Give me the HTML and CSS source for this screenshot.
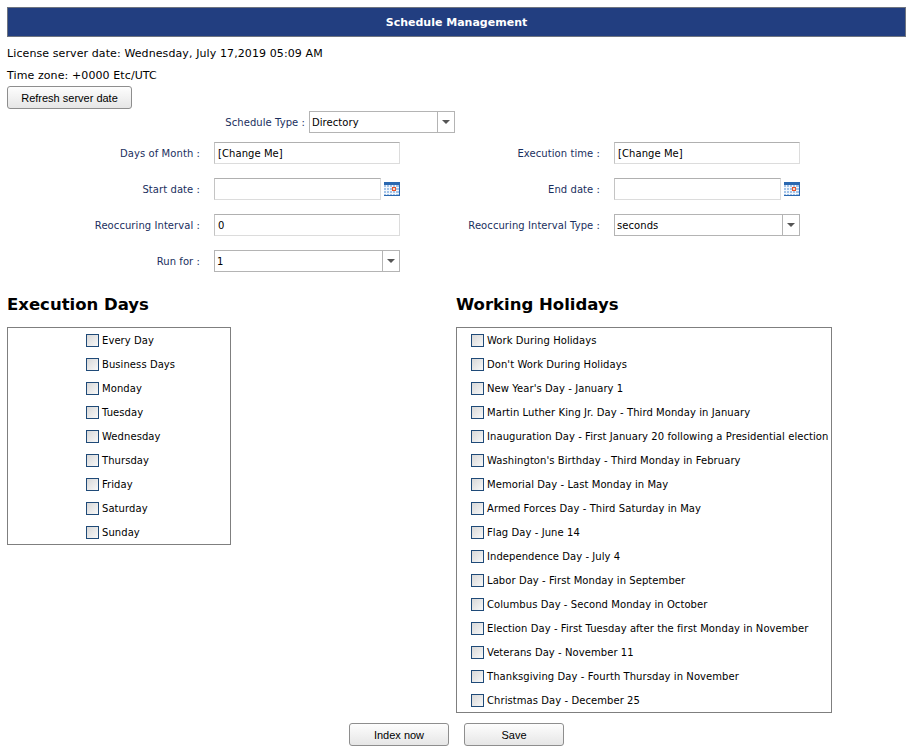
FILE: index.html
```html
<!DOCTYPE html>
<html lang="en">
<head>
    <title>Schedule Management</title>
    <link rel="stylesheet" href="styles.css">
</head>
<body>
    <svg class="defs" width="0" height="0">
        <symbol id="cal" viewBox="0 0 16 14">
            <rect x="0" y="0" width="16" height="14" fill="#2a68b0"/>
            <rect x="0" y="3" width="15" height="10" fill="#a3c3e8"/>
            <path d="M0 5.5h15M0 8.5h15M0 11.5h15M2.5 3v10M5.5 3v10M8.5 3v10M11.5 3v10" stroke="#f2f7fc" stroke-width="1"/>
            <rect x="8.5" y="5.5" width="3" height="3" fill="#f7d9cc" stroke="#e8552c"/>
        </symbol>
    </svg>

    <div class="page">
        <div class="title-bar">Schedule Management</div>
        <p class="info">License server date: Wednesday, July 17,2019 05:09 AM</p>
        <p class="info">Time zone: +0000 Etc/UTC</p>
        <button class="btn btn-refresh">Refresh server date</button>

        <div class="type-row">
            <label class="field-label type-label">Schedule Type :</label>
            <div class="combo type-combo">
                <span class="combo-value">Directory</span>
                <span class="combo-arrow"></span>
            </div>
        </div>

        <div class="form-grid">
            <label class="field-label">Days of Month :</label>
            <input class="text-input" type="text" value="[Change Me]">
            <label class="field-label">Execution time :</label>
            <input class="text-input" type="text" value="[Change Me]">

            <label class="field-label">Start date :</label>
            <div class="date-field">
                <input class="text-input" type="text">
                <svg class="cal-icon"><use href="#cal"/></svg>
            </div>
            <label class="field-label">End date :</label>
            <div class="date-field">
                <input class="text-input" type="text">
                <svg class="cal-icon"><use href="#cal"/></svg>
            </div>

            <label class="field-label">Reoccuring Interval :</label>
            <input class="text-input" type="text" value="0">
            <label class="field-label">Reoccuring Interval Type :</label>
            <div class="combo">
                <span class="combo-value">seconds</span>
                <span class="combo-arrow"></span>
            </div>

            <label class="field-label">Run for :</label>
            <div class="combo">
                <span class="combo-value">1</span>
                <span class="combo-arrow"></span>
            </div>
        </div>

        <div class="lists">
            <section>
                <h2>Execution Days</h2>
                <div class="check-panel days-panel">
                    <label class="check-row"><input type="checkbox">Every Day</label>
                    <label class="check-row"><input type="checkbox">Business Days</label>
                    <label class="check-row"><input type="checkbox">Monday</label>
                    <label class="check-row"><input type="checkbox">Tuesday</label>
                    <label class="check-row"><input type="checkbox">Wednesday</label>
                    <label class="check-row"><input type="checkbox">Thursday</label>
                    <label class="check-row"><input type="checkbox">Friday</label>
                    <label class="check-row"><input type="checkbox">Saturday</label>
                    <label class="check-row"><input type="checkbox">Sunday</label>
                </div>
            </section>
            <section>
                <h2>Working Holidays</h2>
                <div class="check-panel holidays-panel">
                    <label class="check-row"><input type="checkbox">Work During Holidays</label>
                    <label class="check-row"><input type="checkbox">Don't Work During Holidays</label>
                    <label class="check-row"><input type="checkbox">New Year's Day - January 1</label>
                    <label class="check-row"><input type="checkbox">Martin Luther King Jr. Day - Third Monday in January</label>
                    <label class="check-row"><input type="checkbox">Inauguration Day - First January 20 following a Presidential election</label>
                    <label class="check-row"><input type="checkbox">Washington's Birthday - Third Monday in February</label>
                    <label class="check-row"><input type="checkbox">Memorial Day - Last Monday in May</label>
                    <label class="check-row"><input type="checkbox">Armed Forces Day - Third Saturday in May</label>
                    <label class="check-row"><input type="checkbox">Flag Day - June 14</label>
                    <label class="check-row"><input type="checkbox">Independence Day - July 4</label>
                    <label class="check-row"><input type="checkbox">Labor Day - First Monday in September</label>
                    <label class="check-row"><input type="checkbox">Columbus Day - Second Monday in October</label>
                    <label class="check-row"><input type="checkbox">Election Day - First Tuesday after the first Monday in November</label>
                    <label class="check-row"><input type="checkbox">Veterans Day - November 11</label>
                    <label class="check-row"><input type="checkbox">Thanksgiving Day - Fourth Thursday in November</label>
                    <label class="check-row"><input type="checkbox">Christmas Day - December 25</label>
                </div>
            </section>
        </div>

        <div class="actions">
            <button class="btn btn-action">Index now</button>
            <button class="btn btn-action">Save</button>
        </div>
    </div>
</body>
</html>
```

FILE: styles.css
```css
html, body {
margin: 0;
background-color: #fff;
}

body {
font-family: "DejaVu Sans", Verdana, sans-serif;
font-size: 10px;
letter-spacing: 0.07px;
color: #000;
}

.defs {
position: absolute;
}

.page {
width: 899px;
padding: 7px 0 0 7px;
}

.title-bar {
height: 28px;
line-height: 29px;
border: 1px solid #6e7480;
background-color: #223e80;
color: #fff;
font-size: 11px;
font-weight: bold;
letter-spacing: 0;
text-align: center;
}

.info {
margin: 0;
height: 22px;
line-height: 22px;
font-size: 11px;
letter-spacing: 0.1px;
}

.info:first-of-type {
margin-top: 6px;
}

.btn {
display: block;
height: 23px;
padding: 0;
font-family: "Liberation Sans", Arial, sans-serif;
font-size: 11px;
letter-spacing: 0;
color: #000;
border: 1px solid #8e8e8e;
border-radius: 3px;
background: linear-gradient(#fdfdfd, #e6e6e6);
}

.btn-refresh {
width: 125px;
margin-top: -1px;
}

.field-label {
color: #1a2f5e;
text-align: right;
}

.type-row {
display: flex;
align-items: center;
gap: 4px;
margin-top: 2px;
}

.type-label {
width: 298px;
}

.type-combo {
width: 146px;
}

.combo {
display: flex;
height: 22px;
line-height: 21px;
box-sizing: border-box;
border: 1px solid #b4b4b4;
background-color: #fff;
}

.combo-value {
flex: 1;
padding-left: 2px;
}

.combo-arrow {
width: 16px;
border-left: 1px solid #b4b4b4;
position: relative;
}

.combo-arrow::after {
content: "";
position: absolute;
left: 4px;
top: 8px;
border-left: 4px solid transparent;
border-right: 4px solid transparent;
border-top: 4px solid #555;
}

.form-grid {
display: grid;
grid-template-columns: 193px 186px 186px 186px;
grid-auto-rows: 22px;
column-gap: 14px;
row-gap: 14px;
align-items: center;
margin-top: 9px;
}

.text-input {
display: block;
width: 100%;
height: 22px;
box-sizing: border-box;
padding: 0 3px;
font-family: "DejaVu Sans", Verdana, sans-serif;
font-size: 10px;
letter-spacing: 0.07px;
color: #000;
border: 1px solid #dcdcdc;
border-top-color: #b0b0b0;
border-left-color: #c4c4c4;
border-radius: 0;
outline: none;
}

.date-field {
display: flex;
align-items: center;
gap: 3px;
}

.date-field .text-input {
width: 167px;
}

.cal-icon {
width: 16px;
height: 14px;
}

.lists {
display: grid;
grid-template-columns: 449px 1fr;
margin-top: 22px;
}

h2 {
margin: 0;
height: 33px;
line-height: 22px;
font-size: 16.5px;
font-weight: bold;
letter-spacing: 0;
}

.check-panel {
box-sizing: border-box;
border: 1px solid #7f7f7f;
}

.days-panel {
width: 224px;
padding-left: 78px;
}

.holidays-panel {
width: 376px;
padding-left: 14px;
}

.check-row {
display: flex;
align-items: center;
height: 24px;
white-space: nowrap;
}

.check-row input {
appearance: none;
width: 13px;
height: 13px;
flex: none;
margin: 0 3px 0 0;
border: 1px solid #1f4a78;
background: linear-gradient(135deg, #d8d8d8, #f8f8f8);
}

.actions {
display: flex;
gap: 15px;
margin: 10px 0 0 342px;
}

.btn-action {
width: 100px;
}
```
